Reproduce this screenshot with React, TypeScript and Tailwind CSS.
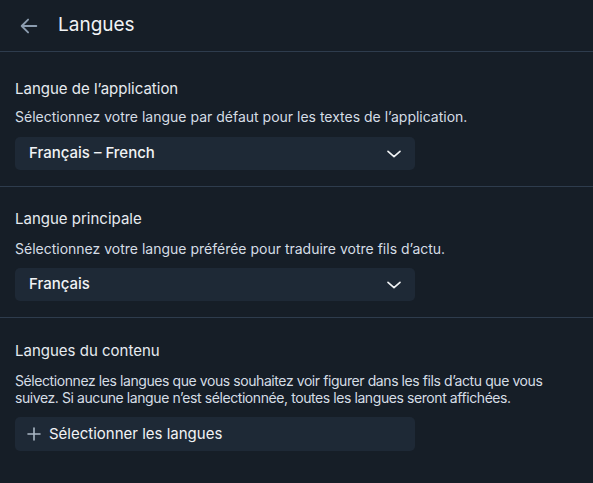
import React from "react";

const Chevron = () => (
  <svg width="18" height="18" viewBox="0 0 24 24" fill="none" stroke="currentColor" strokeWidth="2.2" strokeLinecap="round" strokeLinejoin="round">
    <path d="M4 8.5l8 7 8-7" />
  </svg>
);

type SelectProps = { value: string };

const SelectBox = ({ value }: SelectProps) => (
  <div className="flex h-[33px] w-[400px] items-center justify-between rounded-[5px] bg-[#1e2936] pl-[14px] pr-[12px] text-[#f1f3f5]">
    <span className="text-[15px] font-medium">{value}</span>
    <Chevron />
  </div>
);

export default function App() {
  return (
    <div className="min-h-[483px] w-[593px] bg-[#161e27] font-['Inter','Noto_Sans',sans-serif] text-[#e6ebf0]">
      {/* Header */}
      <header className="flex h-[52px] items-center border-b border-[#2e3c4d] pl-[18px]">
        <svg width="22" height="22" viewBox="0 0 24 24" fill="none" stroke="#8c9db0" strokeWidth="2" strokeLinecap="round" strokeLinejoin="round">
          <path d="M20 12H4M11 5l-7 7 7 7" />
        </svg>
        <h1 className="ml-[18px] text-[19px] text-[#f1f3f5]">Langues</h1>
      </header>

      {/* App language */}
      <section className="border-b border-[#2e3c4d] px-[15px] pt-[25px] pb-4">
        <h2 className="text-[15px] leading-6">Langue de l’application</h2>
        <p className="mt-1.5 text-[14px] leading-5 text-[#d5dde5]">
          Sélectionnez votre langue par défaut pour les textes de l’application.
        </p>
        <div className="mt-2.5">
          <SelectBox value="Français – French" />
        </div>
      </section>

      {/* Primary language */}
      <section className="border-b border-[#2e3c4d] px-[15px] pt-5 pb-4">
        <h2 className="text-[15px] leading-6">Langue principale</h2>
        <p className="mt-2 text-[14px] leading-5 text-[#d5dde5]">
          Sélectionnez votre langue préférée pour traduire votre fils d’actu.
        </p>
        <div className="mt-[9px]">
          <SelectBox value="Français" />
        </div>
      </section>

      {/* Content languages */}
      <section className="px-[15px] pt-[21px] pb-6">
        <h2 className="text-[15px] leading-6">Langues du contenu</h2>
        <p className="mt-[9px] w-[560px] text-[14px] leading-[17px] tracking-[-0.42px] text-[#d5dde5]">
          Sélectionnez les langues que vous souhaitez voir figurer dans les fils d’actu que vous suivez. Si aucune langue n’est sélectionnée, toutes les langues seront affichées.
        </p>
        <button className="mt-[11px] flex h-[34px] w-[400px] items-center gap-[8px] rounded-[5px] bg-[#1e2936] pl-[12px] text-[#f1f3f5]">
          <svg width="14" height="14" viewBox="0 0 14 14" fill="none" stroke="#aab7c5" strokeWidth="1.6" strokeLinecap="round">
            <path d="M7 1v12M1 7h12" />
          </svg>
          <span className="text-[15px]">Sélectionner les langues</span>
        </button>
      </section>
    </div>
  );
}
